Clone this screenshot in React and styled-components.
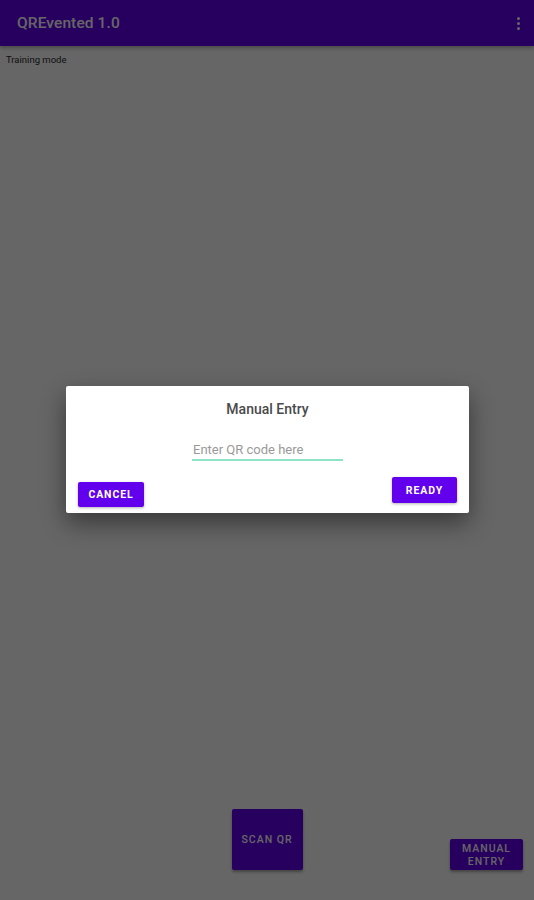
import styled, { createGlobalStyle } from "styled-components"

const Global = createGlobalStyle`
    html, body {
        margin: 0;
        padding: 0;
        background: #ffffff;
        font-family: Roboto, "Noto Sans", Arial, sans-serif;
    }
`

const Tela = styled.div`
    position: relative;
    width: 534px;
    height: 900px;
    display: flex;
    flex-direction: column;
    background: #ffffff;
    overflow: hidden;
`

const BarraTopo = styled.header`
    height: 46px;
    flex-shrink: 0;
    background: #6200ee;
    display: flex;
    align-items: center;
    justify-content: space-between;
    padding: 0 14px 0 17px;
    box-shadow: 0 2px 4px rgba(0, 0, 0, 0.3);

    h1{
        margin: 0;
        font-size: 15.5px;
        font-weight: 500;
        color: #ffffff;
        letter-spacing: 0.1px;
    }
`

const Kebab = styled.div`
    display: flex;
    flex-direction: column;
    gap: 2px;

    span{
        width: 3px;
        height: 3px;
        border-radius: 50%;
        background: #ffffff;
    }
`

const Conteudo = styled.main`
    flex: 1;
    display: flex;
    flex-direction: column;
    padding: 8px 0 30px 6px;

    p{
        margin: 0;
        font-size: 9.5px;
        color: #2a2a2a;
    }
`

const Espaco = styled.div`
    flex: 1;
`

const LinhaBotoes = styled.div`
    display: grid;
    grid-template-columns: 1fr auto 1fr;
    align-items: end;
    margin-left: -6px;
`

const BotaoRoxo = styled.button`
    border: none;
    border-radius: 2px;
    background: #6200ee;
    color: #ffffff;
    font-family: Roboto, Arial, sans-serif;
    font-weight: 500;
    font-size: 10.5px;
    letter-spacing: 1px;
    text-transform: uppercase;
    line-height: 13px;
    padding: 0;
    width: ${(p) => p.largura}px;
    height: ${(p) => p.altura}px;
    margin-right: ${(p) => p.direita || 0}px;
    box-shadow: 0 2px 3px rgba(0, 0, 0, 0.35);
    justify-self: ${(p) => p.lado || "center"};
`

const Escurecer = styled.div`
    position: absolute;
    inset: 0;
    background: rgba(0, 0, 0, 0.6);
`

const Dialogo = styled.div`
    position: absolute;
    left: 66px;
    top: 386px;
    width: 403px;
    height: 127px;
    box-sizing: border-box;
    background: #ffffff;
    border-radius: 2px;
    box-shadow: 0 10px 24px rgba(0, 0, 0, 0.45);
    display: flex;
    flex-direction: column;
    align-items: center;
    padding: 15px 12px 6px 12px;

    h2{
        margin: 0;
        font-size: 14px;
        font-weight: 500;
        color: #4a4a4a;
    }
`

const Campo = styled.input`
    margin-top: 25px;
    width: 151px;
    box-sizing: border-box;
    border: none;
    border-bottom: 2px solid #8de3c8;
    outline: none;
    font-family: Roboto, Arial, sans-serif;
    font-size: 13px;
    color: #333;
    padding: 0 0 2px 1px;
    background: transparent;

    &::placeholder{
        color: #9a9a9a;
    }
`

const Acoes = styled.div`
    width: 100%;
    margin-top: 16px;
    display: flex;
    justify-content: space-between;
    align-items: flex-start;
`

const BotaoDialogo = styled.button`
    border: none;
    border-radius: 2px;
    background: #6200ee;
    color: #ffffff;
    font-family: Roboto, Arial, sans-serif;
    font-weight: 700;
    font-size: 10.5px;
    letter-spacing: 0.9px;
    width: ${(p) => p.largura}px;
    height: ${(p) => p.altura}px;
    padding: 0;
    margin-top: ${(p) => p.desce}px;
    box-shadow: 0 1px 3px rgba(0, 0, 0, 0.3);
`

export default function App() {
    return (
        <>
            <Global />
            <Tela>
                <BarraTopo>
                    <h1>QREvented 1.0</h1>
                    <Kebab><span></span><span></span><span></span></Kebab>
                </BarraTopo>
                <Conteudo>
                    <p>Training mode</p>
                    <Espaco />
                    <LinhaBotoes>
                        <span></span>
                        <BotaoRoxo largura={71} altura={61}>Scan QR</BotaoRoxo>
                        <BotaoRoxo largura={73} altura={31} lado="end" direita={11}>Manual<br />Entry</BotaoRoxo>
                    </LinhaBotoes>
                </Conteudo>
                <Escurecer />
                <Dialogo>
                    <h2>Manual Entry</h2>
                    <Campo placeholder="Enter QR code here" />
                    <Acoes>
                        <BotaoDialogo largura={66} altura={25} desce={5}>CANCEL</BotaoDialogo>
                        <BotaoDialogo largura={65} altura={26} desce={0}>READY</BotaoDialogo>
                    </Acoes>
                </Dialogo>
            </Tela>
        </>
    )
}
